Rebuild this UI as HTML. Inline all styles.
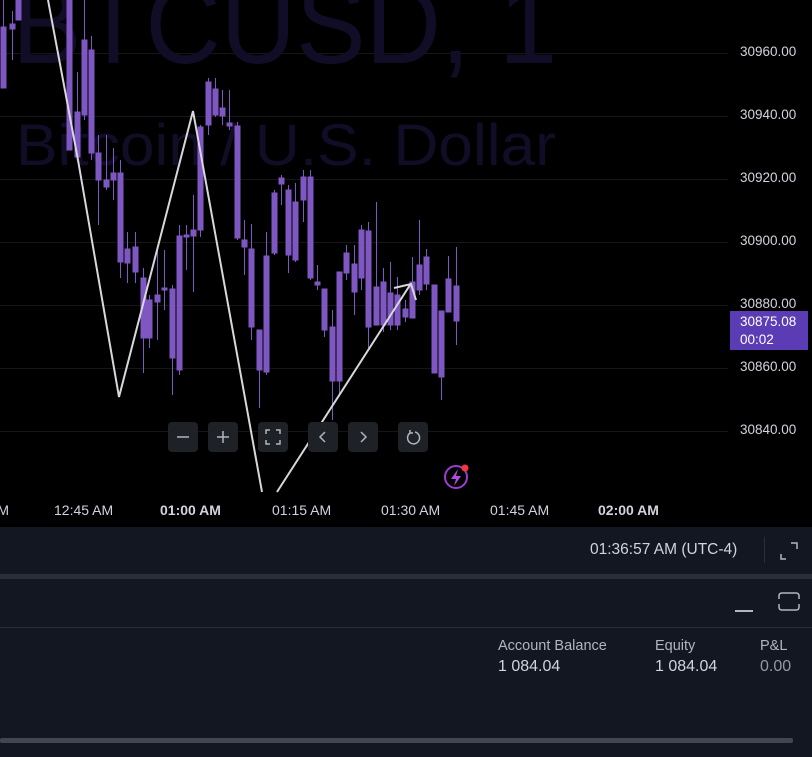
<!DOCTYPE html>
<html><head><meta charset="utf-8"><style>
html,body{margin:0;padding:0;background:#000;width:812px;height:757px;overflow:hidden;font-family:"Liberation Sans",sans-serif}
.ax{position:absolute;left:740px;font-size:13.5px;color:#d1d4dc}
.tl{position:absolute;top:502px;font-size:14px;color:#d1d4dc}
.btn{position:absolute;top:422px;width:30px;height:30px;background:#1e2126;border-radius:4px}
</style></head><body>
<svg width="812" height="528" style="position:absolute;left:0;top:0">
<g stroke="#161616" stroke-width="1">
<line x1="0" y1="53.5" x2="728" y2="53.5"/><line x1="0" y1="116.5" x2="728" y2="116.5"/><line x1="0" y1="179.5" x2="728" y2="179.5"/><line x1="0" y1="242.5" x2="728" y2="242.5"/><line x1="0" y1="305.5" x2="728" y2="305.5"/><line x1="0" y1="368.5" x2="728" y2="368.5"/><line x1="0" y1="431.5" x2="728" y2="431.5"/>
</g>
<text x="12" y="63" font-size="112" fill="#110d27" textLength="545" lengthAdjust="spacingAndGlyphs">BTCUSD, 1</text>
<text x="16" y="165" font-size="58" fill="#110d27" textLength="540" lengthAdjust="spacingAndGlyphs">Bitcoin / U.S. Dollar</text>
<g stroke="#7e57c2" stroke-width="1" fill="#7e57c2">
<line x1="3.5" y1="0" x2="3.5" y2="88"/><rect x="1" y="27" width="5" height="61"/>
<line x1="12.5" y1="11" x2="12.5" y2="60"/><rect x="10" y="24" width="5" height="5"/>
<line x1="18.5" y1="0" x2="18.5" y2="20"/><rect x="16" y="0" width="5" height="20"/>
<line x1="69.5" y1="0" x2="69.5" y2="150"/><rect x="67" y="0" width="5" height="150"/>
<line x1="77.5" y1="72" x2="77.5" y2="160"/><rect x="75" y="112" width="5" height="45"/>
<line x1="84.5" y1="0" x2="84.5" y2="120"/><rect x="82" y="40" width="5" height="75"/>
<line x1="91.5" y1="36" x2="91.5" y2="160"/><rect x="89" y="50" width="5" height="103"/>
<line x1="98.5" y1="135" x2="98.5" y2="225"/><rect x="96" y="153" width="5" height="27"/>
<line x1="106.5" y1="135" x2="106.5" y2="190"/><rect x="104" y="180" width="5" height="7"/>
<line x1="113.5" y1="148" x2="113.5" y2="200"/><rect x="111" y="173" width="5" height="7"/>
<line x1="120.5" y1="160" x2="120.5" y2="278"/><rect x="118" y="173" width="5" height="89"/>
<line x1="127.5" y1="232" x2="127.5" y2="283"/><rect x="125" y="249" width="5" height="14"/>
<line x1="135.5" y1="232" x2="135.5" y2="283"/><rect x="133" y="247" width="5" height="25"/>
<line x1="143.5" y1="268" x2="143.5" y2="373"/><rect x="141" y="278" width="5" height="60"/>
<line x1="149.5" y1="295" x2="149.5" y2="348"/><rect x="147" y="300" width="5" height="38"/>
<line x1="157.5" y1="250" x2="157.5" y2="340"/><rect x="155" y="295" width="5" height="7"/>
<line x1="164.5" y1="250" x2="164.5" y2="310"/><rect x="162" y="288" width="5" height="2"/>
<line x1="172.5" y1="285" x2="172.5" y2="395"/><rect x="170" y="289" width="5" height="69"/>
<line x1="179.5" y1="225" x2="179.5" y2="375"/><rect x="177" y="236" width="5" height="134"/>
<line x1="186.5" y1="225" x2="186.5" y2="270"/><rect x="184" y="235" width="5" height="2"/>
<line x1="193.5" y1="195" x2="193.5" y2="292"/><rect x="191" y="230" width="5" height="6"/>
<line x1="200.5" y1="125" x2="200.5" y2="237"/><rect x="198" y="127" width="5" height="103"/>
<line x1="208.5" y1="78" x2="208.5" y2="135"/><rect x="206" y="82" width="5" height="43"/>
<line x1="215.5" y1="78" x2="215.5" y2="117"/><rect x="213" y="89" width="5" height="26"/>
<line x1="222.5" y1="90" x2="222.5" y2="125"/><rect x="220" y="108" width="5" height="8"/>
<line x1="229.5" y1="90" x2="229.5" y2="130"/><rect x="227" y="123" width="5" height="3"/>
<line x1="237.5" y1="122" x2="237.5" y2="240"/><rect x="235" y="126" width="5" height="112"/>
<line x1="244.5" y1="220" x2="244.5" y2="275"/><rect x="242" y="240" width="5" height="7"/>
<line x1="251.5" y1="224" x2="251.5" y2="340"/><rect x="249" y="249" width="5" height="78"/>
<line x1="259.5" y1="330" x2="259.5" y2="408"/><rect x="257" y="330" width="5" height="40"/>
<line x1="266.5" y1="232" x2="266.5" y2="375"/><rect x="264" y="256" width="5" height="116"/>
<line x1="274.5" y1="190" x2="274.5" y2="255"/><rect x="272" y="193" width="5" height="60"/>
<line x1="281.5" y1="175" x2="281.5" y2="205"/><rect x="279" y="178" width="5" height="6"/>
<line x1="288.5" y1="185" x2="288.5" y2="273"/><rect x="286" y="190" width="5" height="65"/>
<line x1="295.5" y1="183" x2="295.5" y2="262"/><rect x="293" y="202" width="5" height="58"/>
<line x1="303.5" y1="170" x2="303.5" y2="222"/><rect x="301" y="177" width="5" height="23"/>
<line x1="310.5" y1="170" x2="310.5" y2="280"/><rect x="308" y="177" width="5" height="101"/>
<line x1="317.5" y1="265" x2="317.5" y2="290"/><rect x="315" y="282" width="5" height="3"/>
<line x1="324.5" y1="289" x2="324.5" y2="337"/><rect x="322" y="289" width="5" height="41"/>
<line x1="332.5" y1="310" x2="332.5" y2="420"/><rect x="330" y="327" width="5" height="54"/>
<line x1="339.5" y1="272" x2="339.5" y2="395"/><rect x="337" y="272" width="5" height="109"/>
<line x1="346.5" y1="245" x2="346.5" y2="280"/><rect x="344" y="253" width="5" height="20"/>
<line x1="354.5" y1="245" x2="354.5" y2="315"/><rect x="352" y="264" width="5" height="28"/>
<line x1="361.5" y1="225" x2="361.5" y2="290"/><rect x="359" y="230" width="5" height="48"/>
<line x1="368.5" y1="222" x2="368.5" y2="348"/><rect x="366" y="231" width="5" height="96"/>
<line x1="376.5" y1="202" x2="376.5" y2="325"/><rect x="374" y="287" width="5" height="38"/>
<line x1="383.5" y1="268" x2="383.5" y2="332"/><rect x="381" y="282" width="5" height="43"/>
<line x1="390.5" y1="262" x2="390.5" y2="330"/><rect x="388" y="293" width="5" height="32"/>
<line x1="397.5" y1="277" x2="397.5" y2="330"/><rect x="395" y="295" width="5" height="30"/>
<line x1="405.5" y1="300" x2="405.5" y2="322"/><rect x="403" y="309" width="5" height="8"/>
<line x1="412.5" y1="257" x2="412.5" y2="318"/><rect x="410" y="282" width="5" height="36"/>
<line x1="419.5" y1="220" x2="419.5" y2="295"/><rect x="417" y="265" width="5" height="25"/>
<line x1="426.5" y1="249" x2="426.5" y2="290"/><rect x="424" y="257" width="5" height="27"/>
<line x1="434.5" y1="285" x2="434.5" y2="373"/><rect x="432" y="285" width="5" height="88"/>
<line x1="441.5" y1="311" x2="441.5" y2="400"/><rect x="439" y="311" width="5" height="66"/>
<line x1="448.5" y1="256" x2="448.5" y2="312"/><rect x="446" y="279" width="5" height="33"/>
<line x1="456.5" y1="247" x2="456.5" y2="345"/><rect x="454" y="286" width="5" height="35"/>
</g>
<g stroke="#d8d8dc" stroke-width="2" fill="none">
<polyline points="48,0 78,160 119,397 193,111 262,492"/>
<polyline points="277,492 410,285"/>
<polyline points="394,288 411,284 416,300"/>
</g>
<circle cx="456" cy="477" r="11" fill="none" stroke="#9c3dd0" stroke-width="2"/>
<path d="M458 469 L451 479 L456 479 L454 486 L461 476 L456 476 Z" fill="#b04be0"/>
<circle cx="465" cy="468" r="3.5" fill="#f23645"/>
</svg>
<div class="btn" style="left:168px"><svg width="30" height="30"><line x1="9" y1="15" x2="21" y2="15" stroke="#b2b5be" stroke-width="1.5"/></svg></div>
<div class="btn" style="left:208px"><svg width="30" height="30"><path d="M9 15H21M15 9V21" stroke="#b2b5be" stroke-width="1.5"/></svg></div>
<div class="btn" style="left:258px"><svg width="30" height="30"><path d="M8 12V8H12M18 8H22V12M22 18V22H18M12 22H8V18" stroke="#b2b5be" stroke-width="1.5" fill="none"/></svg></div>
<div class="btn" style="left:308px"><svg width="30" height="30"><path d="M17 10L12 15L17 20" stroke="#b2b5be" stroke-width="1.5" fill="none"/></svg></div>
<div class="btn" style="left:348px"><svg width="30" height="30"><path d="M13 10L18 15L13 20" stroke="#b2b5be" stroke-width="1.5" fill="none"/></svg></div>
<div class="btn" style="left:398px"><svg width="30" height="30"><path d="M12 11A6 6 0 1 0 17 10" stroke="#b2b5be" stroke-width="1.5" fill="none"/><path d="M12 8V11H15" stroke="#b2b5be" stroke-width="1.5" fill="none"/></svg></div>
<div class="ax" style="top:44px">30960.00</div>
<div class="ax" style="top:107px">30940.00</div>
<div class="ax" style="top:170px">30920.00</div>
<div class="ax" style="top:233px">30900.00</div>
<div class="ax" style="top:296px">30880.00</div>
<div class="ax" style="top:359px">30860.00</div>
<div class="ax" style="top:422px">30840.00</div>
<div style="position:absolute;left:730px;top:311px;width:78px;height:39px;background:#5b3cb4;color:#fff;font-size:13.5px;line-height:18px;padding:2px 0 0 10px;box-sizing:border-box">30875.08<br>00:02</div>
<div class="tl" style="left:-12px">AM</div>
<div class="tl" style="left:54px">12:45 AM</div>
<div class="tl" style="left:160px;font-weight:bold">01:00 AM</div>
<div class="tl" style="left:272px">01:15 AM</div>
<div class="tl" style="left:381px">01:30 AM</div>
<div class="tl" style="left:490px">01:45 AM</div>
<div class="tl" style="left:598px;font-weight:bold">02:00 AM</div>
<div style="position:absolute;left:0;top:527px;width:812px;height:230px;background:#131722"></div>
<div style="position:absolute;left:0;top:574px;width:812px;height:5px;background:#2a2e39"></div>
<div style="position:absolute;left:0;top:627px;width:812px;height:1px;background:#2a2e39"></div>
<div style="position:absolute;left:0;top:738px;width:793px;height:5px;background:#434651;border-radius:2px"></div>
<div style="position:absolute;left:590px;top:541px;font-size:15.5px;color:#d1d4dc">01:36:57 AM (UTC-4)</div>
<div style="position:absolute;left:764px;top:537px;width:1px;height:26px;background:#2a2e39"></div>
<svg style="position:absolute;left:778px;top:540px" width="22" height="22"><path d="M3 14V19H8M13 3H19V9" stroke="#b2b5be" stroke-width="1.5" fill="none"/></svg>
<div style="position:absolute;left:735px;top:610px;width:18px;height:1.5px;background:#b2b5be"></div>
<svg style="position:absolute;left:778px;top:592px" width="22" height="20"><path d="M1 7V4Q1 1 4 1H18Q21 1 21 4V7M1 12V15Q1 18 4 18H18Q21 18 21 15V12" stroke="#b2b5be" stroke-width="1.5" fill="none"/></svg>
<div style="position:absolute;left:498px;top:638px;font-size:14.5px;color:#b2b5be">Account Balance</div>
<div style="position:absolute;left:498px;top:658px;font-size:16px;color:#d1d4dc">1 084.04</div>
<div style="position:absolute;left:655px;top:638px;font-size:14.5px;color:#b2b5be">Equity</div>
<div style="position:absolute;left:655px;top:658px;font-size:16px;color:#d1d4dc">1 084.04</div>
<div style="position:absolute;left:760px;top:638px;font-size:14.5px;color:#b2b5be">P&amp;L</div>
<div style="position:absolute;left:760px;top:658px;font-size:16px;color:#9598a1">0.00</div>
</body></html>
